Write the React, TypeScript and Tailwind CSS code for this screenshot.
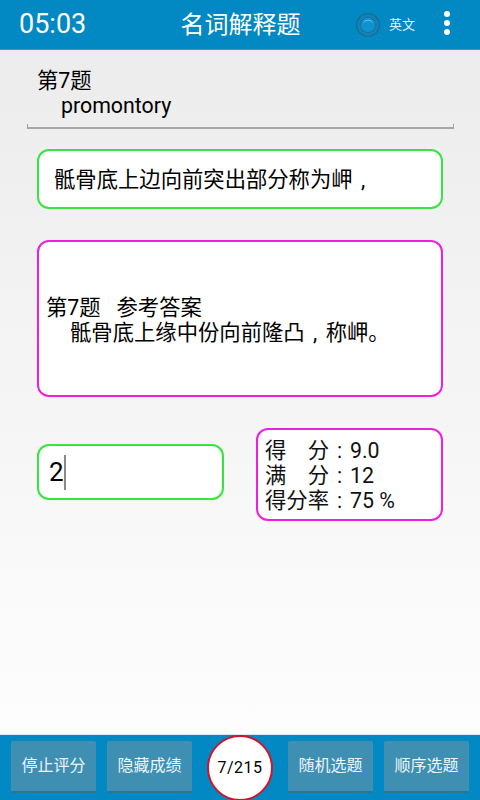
const font = "font-['Roboto','Noto_Sans_CJK_SC','Noto_Sans_CJK_JP',sans-serif]";

function BottomButton({ label }: { label: string }) {
  return (
    <button className="w-[85px] h-[52px] bg-[#3f8fb2] rounded-[2px] border-b-2 border-[#2f7391] text-[#edf4f7] text-[16px] flex items-center justify-center">
      {label}
    </button>
  );
}

function Comma() {
  return <span className="inline-block w-[21px] text-center">,</span>;
}

function Colon() {
  return <span className="inline-block w-[21px] text-center">:</span>;
}

export default function App() {
  return (
    <div className={`${font} w-[480px] h-[800px] flex flex-col bg-gradient-to-b from-[#ebebeb] to-white text-black overflow-hidden`}>
      <header className="h-[50px] shrink-0 bg-[#0288c2] border-b border-[#2a9ccb] text-white flex items-center">
        <div className="w-[105px] pl-[19px] text-[27px] leading-none whitespace-nowrap">05:03</div>
        <div className="w-[271px] text-center text-[24px] leading-none whitespace-nowrap">名词解释题</div>
        <svg width="24" height="24" viewBox="0 0 24 24" className="ml-[-20px] shrink-0">
          <circle cx="12" cy="12" r="11.3" fill="none" stroke="#2c6485" strokeWidth="1.1" />
          <circle cx="12" cy="12" r="7.6" fill="#0d93cf" stroke="#2c6f94" strokeWidth="1.1" />
          <path d="M7.5 9.5A5.5 5.5 0 0 1 16.5 9.5" fill="none" stroke="#6cc4e6" strokeWidth="1" />
        </svg>
        <span className="ml-[9px] text-[13px] leading-none text-[#dff2fb] whitespace-nowrap">英文</span>
        <div className="ml-[29px] mt-[-3px] flex flex-col gap-[3px]">
          <span className="w-[6px] h-[6px] rounded-full bg-white" />
          <span className="w-[6px] h-[6px] rounded-full bg-white" />
          <span className="w-[6px] h-[6px] rounded-full bg-white" />
        </div>
      </header>

      <main className="flex-1 flex flex-col">
        <div className="mt-[18px] ml-[27px] w-[427px] h-[61px] px-[10px] border-b-2 border-[#a8a8a8] relative text-[21.33px] leading-[25px]">
          <div>第7题</div>
          <div className="pl-[24px] whitespace-pre">promontory</div>
          <span className="absolute left-0 bottom-[-2px] w-px h-[5px] bg-[#a0a0a0]" />
          <span className="absolute right-0 bottom-[-2px] w-px h-[5px] bg-[#a0a0a0]" />
        </div>

        <div className="mt-[20px] ml-[37px] w-[406px] h-[60px] bg-white border-2 border-[#35e63c] rounded-[12px] flex items-center pl-[15px] pt-[1px] text-[21.33px] whitespace-pre">
          <span>骶骨底上边向前突出部分称为岬<Comma /></span>
        </div>

        <div className="mt-[31px] ml-[37px] w-[406px] h-[157px] bg-white border-2 border-[#f01fe0] rounded-[12px] flex flex-col justify-center pl-[7px] pt-[2px] text-[21.33px] leading-[25px]">
          <div>第7题&nbsp;&nbsp;&nbsp;参考答案</div>
          <div className="pl-[24px]">骶骨底上缘中份向前隆凸<Comma />称岬。</div>
        </div>

        <div className="mt-[31px] ml-[37px] flex items-start gap-[32px]">
          <div className="mt-[16px] w-[187px] h-[56px] bg-white border-2 border-[#35e63c] rounded-[12px] flex items-center pl-[10px] text-[26px]">
            <span>2</span>
            <span className="w-[2px] h-[35px] bg-[#8a8a8a]" />
          </div>
          <div className="w-[187px] h-[93px] bg-white border-2 border-[#f01fe0] rounded-[12px] flex flex-col justify-center pl-[7px] pt-[2px] text-[21.33px] leading-[25px] text-[#111]">
            <div className="whitespace-pre">得　分<Colon />9.0</div>
            <div className="whitespace-pre">满　分<Colon />12</div>
            <div className="whitespace-pre">得分率<Colon />75 %</div>
          </div>
        </div>
      </main>

      <footer className="h-[66px] shrink-0 bg-[#0288c2] border-t border-[#d8e8f0] flex items-center px-[11px] pb-[2px] relative">
        <BottomButton label="停止评分" />
        <div className="ml-[11px]"><BottomButton label="隐藏成绩" /></div>
        <div className="ml-[15px] mt-[2px] w-[66px] h-[66px] shrink-0 rounded-full bg-white border-2 border-[#d0142c] flex items-center justify-center text-[16px] tracking-[0.5px]">7/215</div>
        <div className="ml-[15px]"><BottomButton label="随机选题" /></div>
        <div className="ml-[11px]"><BottomButton label="顺序选题" /></div>
      </footer>
    </div>
  );
}
